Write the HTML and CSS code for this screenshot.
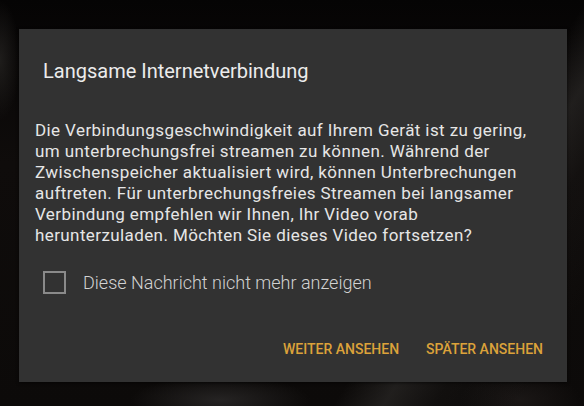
FILE: index.html
```html
<!DOCTYPE html>
<html lang="de">
<head>
    <meta charset="UTF-8">
    <meta name="viewport" content="width=device-width, initial-scale=1.0">
    <title>Langsame Internetverbindung</title>
    <link rel="stylesheet" href="styles.css">
</head>
<body>
    <div class="dialog">
        <div class="dialog-title">Langsame Internetverbindung</div>

        <div class="dialog-message">
            Die Verbindungsgeschwindigkeit auf Ihrem Gerät ist zu gering,
            um unterbrechungsfrei streamen zu können. Während der
            Zwischenspeicher aktualisiert wird, können Unterbrechungen
            auftreten. Für unterbrechungsfreies Streamen bei langsamer
            Verbindung empfehlen wir Ihnen, Ihr Video vorab
            herunterzuladen. Möchten Sie dieses Video fortsetzen?
        </div>

        <label class="check-row">
            <span class="check-box"></span>
            <span class="check-label">Diese Nachricht nicht mehr anzeigen</span>
        </label>

        <div class="dialog-buttons">
            <button class="dialog-button">Weiter ansehen</button>
            <button class="dialog-button">Später ansehen</button>
        </div>
    </div>
</body>
</html>
```

FILE: styles.css
```css
html, body {
    height: 100%;
}
body {
    margin: 0;
    overflow: hidden;
    font-family: Roboto, "Noto Sans", Arial, sans-serif;
    background-color: #0a0808;
    background-image:
        linear-gradient(122deg, transparent 70%, rgba(58,56,54,0.45) 76%, rgba(30,28,27,0.3) 82%, transparent 92%),
        radial-gradient(ellipse 90px 24px at 220px 400px, rgba(48,46,46,0.7), transparent),
        radial-gradient(ellipse 60px 30px at 520px 400px, rgba(30,26,25,0.8), transparent),
        radial-gradient(ellipse 20px 60px at 0px 60px, rgba(40,38,36,0.7), transparent),
        linear-gradient(180deg, #050404 0%, #0f0c0b 40%, #0c0a09 100%);
}
.dialog {
    margin: 29px 0 0 19px;
    width: 548px;
    background: #323232;
    box-shadow: 0 1px 3px rgba(0,0,0,0.6);
}
.dialog-title {
    padding: 30px 0 0 24px;
    font-size: 20px;
    line-height: 24px;
    color: #ececec;
}
.dialog-message {
    margin-top: 37px;
    padding: 0 16px 0 16px;
    font-size: 17px;
    line-height: 21px;
    letter-spacing: 0.4px;
    color: #e6e6e6;
}
.check-row {
    display: flex;
    align-items: center;
    margin: 25px 0 0 24px;
    height: 23px;
}
.check-box {
    width: 19px;
    height: 19px;
    border: 2px solid #8a8a8a;
}
.check-label {
    margin-left: 17px;
    font-size: 18px;
    font-weight: 300;
    color: #d2d2d2;
}
.dialog-buttons {
    display: flex;
    justify-content: flex-end;
    gap: 27px;
    margin-top: 47px;
    padding: 0 24px 25px 0;
}
.dialog-button {
    background: none;
    border: none;
    padding: 0;
    font-family: inherit;
    font-size: 14px;
    font-weight: 500;
    line-height: 16px;
    text-transform: uppercase;
    color: #dca23a;
    cursor: pointer;
}
```
